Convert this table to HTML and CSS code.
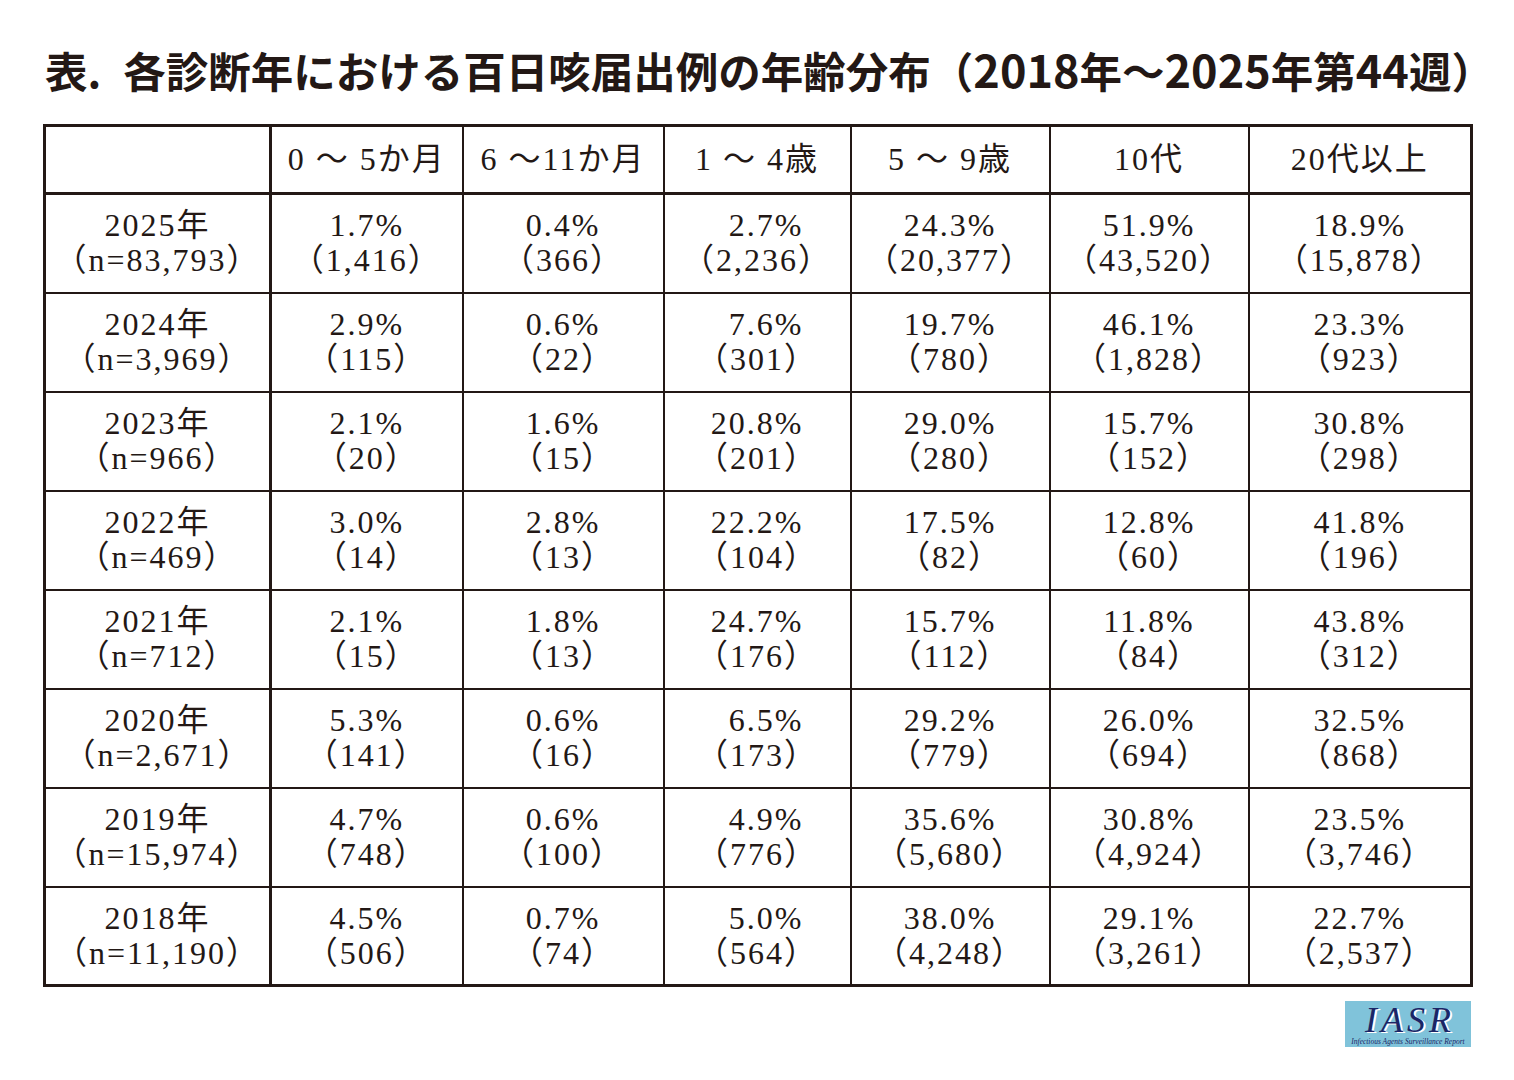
FILE: index.html
```html
<!DOCTYPE html>
<html lang="ja">
<head>
<meta charset="utf-8">
<title>表. 各診断年における百日咳届出例の年齢分布</title>
<link rel="stylesheet" href="styles.css">
</head>
<body>
<div class="page">
  <h1 class="title">表<span class="dot">.</span>各診断年における百日咳届出例の年齢分布（<span class="num">2018</span>年～<span class="num">2025</span>年第<span class="num">44</span>週）</h1>

  <table class="dist">
    <colgroup>
      <col class="c-year">
      <col class="c-a">
      <col class="c-b">
      <col class="c-c">
      <col class="c-d">
      <col class="c-e">
      <col class="c-f">
    </colgroup>
    <thead>
      <tr>
        <th class="corner"></th>
        <th>0 ～ 5か月</th>
        <th>6 ～11か月</th>
        <th>1 ～ 4歳</th>
        <th>5 ～ 9歳</th>
        <th>10代</th>
        <th>20代以上</th>
      </tr>
    </thead>
    <tbody>
      <tr>
        <th>2025年<br>（n=83,793）</th>
        <td>1.7%<br>（1,416）</td>
        <td>0.4%<br>（366）</td>
        <td><span class="pad">2.7%</span><br>（2,236）</td>
        <td>24.3%<br>（20,377）</td>
        <td>51.9%<br>（43,520）</td>
        <td>18.9%<br>（15,878）</td>
      </tr>
      <tr>
        <th>2024年<br>（n=3,969）</th>
        <td>2.9%<br>（115）</td>
        <td>0.6%<br>（22）</td>
        <td><span class="pad">7.6%</span><br>（301）</td>
        <td>19.7%<br>（780）</td>
        <td>46.1%<br>（1,828）</td>
        <td>23.3%<br>（923）</td>
      </tr>
      <tr>
        <th>2023年<br>（n=966）</th>
        <td>2.1%<br>（20）</td>
        <td>1.6%<br>（15）</td>
        <td>20.8%<br>（201）</td>
        <td>29.0%<br>（280）</td>
        <td>15.7%<br>（152）</td>
        <td>30.8%<br>（298）</td>
      </tr>
      <tr>
        <th>2022年<br>（n=469）</th>
        <td>3.0%<br>（14）</td>
        <td>2.8%<br>（13）</td>
        <td>22.2%<br>（104）</td>
        <td>17.5%<br>（82）</td>
        <td>12.8%<br>（60）</td>
        <td>41.8%<br>（196）</td>
      </tr>
      <tr>
        <th>2021年<br>（n=712）</th>
        <td>2.1%<br>（15）</td>
        <td>1.8%<br>（13）</td>
        <td>24.7%<br>（176）</td>
        <td>15.7%<br>（112）</td>
        <td>11.8%<br>（84）</td>
        <td>43.8%<br>（312）</td>
      </tr>
      <tr>
        <th>2020年<br>（n=2,671）</th>
        <td>5.3%<br>（141）</td>
        <td>0.6%<br>（16）</td>
        <td><span class="pad">6.5%</span><br>（173）</td>
        <td>29.2%<br>（779）</td>
        <td>26.0%<br>（694）</td>
        <td>32.5%<br>（868）</td>
      </tr>
      <tr>
        <th>2019年<br>（n=15,974）</th>
        <td>4.7%<br>（748）</td>
        <td>0.6%<br>（100）</td>
        <td><span class="pad">4.9%</span><br>（776）</td>
        <td>35.6%<br>（5,680）</td>
        <td>30.8%<br>（4,924）</td>
        <td>23.5%<br>（3,746）</td>
      </tr>
      <tr>
        <th>2018年<br>（n=11,190）</th>
        <td>4.5%<br>（506）</td>
        <td>0.7%<br>（74）</td>
        <td><span class="pad">5.0%</span><br>（564）</td>
        <td>38.0%<br>（4,248）</td>
        <td>29.1%<br>（3,261）</td>
        <td>22.7%<br>（2,537）</td>
      </tr>
    </tbody>
  </table>

  <div class="footer">
    <div class="logo">
      <div class="logo-mark">IASR</div>
      <div class="logo-sub">Infectious Agents Surveillance Report</div>
    </div>
  </div>
</div>
</body>
</html>
```

FILE: styles.css
```css
html, body {
  margin: 0;
  padding: 0;
  background: #ffffff;
}

.page {
  padding: 43px 43px 0 43px;
  color: #231815;
}

.title {
  margin: 0 0 0 2px;
  font-family: "Noto Sans CJK JP", sans-serif;
  font-weight: 700;
  font-size: 42.5px;
  line-height: 52px;
  white-space: nowrap;
  letter-spacing: 0;
}

.title .num {
  font-size: 45px;
}

.title .dot {
  margin-right: 22px;
}

.dist {
  margin-top: 28px;
  border-collapse: collapse;
  table-layout: fixed;
  width: 1427px;
  border: 3px solid #231815;
  font-family: "Liberation Serif", "Noto Sans CJK JP", serif;
  font-size: 32px;
  letter-spacing: 2px;
  color: #231815;
}

.c-year { width: 226px; }
.c-a { width: 192px; }
.c-b { width: 201px; }
.c-c { width: 187px; }
.c-d { width: 199px; }
.c-e { width: 199px; }
.c-f { width: 223px; }

.dist th,
.dist td {
  border: 2px solid #231815;
  text-align: center;
  vertical-align: middle;
  padding: 0;
  font-weight: 400;
  line-height: 35px;
}

.dist thead th {
  height: 65px;
  border-bottom-width: 3px;
}

.dist tbody tr {
  height: 99px;
}

.dist tbody th,
.dist thead th.corner {
  border-right-width: 3px;
}

.pad {
  padding-left: 18px;
}

.footer {
  display: flex;
  justify-content: flex-end;
  padding-top: 14px;
}

.logo {
  width: 126px;
  height: 46px;
  background: #80c3da;
  display: flex;
  flex-direction: column;
  align-items: center;
  justify-content: center;
  box-sizing: border-box;
}

.logo-mark {
  font-family: "Liberation Serif", serif;
  font-style: italic;
  font-size: 36px;
  line-height: 34px;
  height: 34px;
  letter-spacing: 4px;
  color: #1b2566;
  text-shadow: 2px 1px 0 #ffffff;
  padding-left: 4px;
}

.logo-sub {
  font-family: "Liberation Serif", serif;
  font-style: italic;
  font-size: 7.5px;
  line-height: 9px;
  color: #1b2566;
  white-space: nowrap;
}
```
